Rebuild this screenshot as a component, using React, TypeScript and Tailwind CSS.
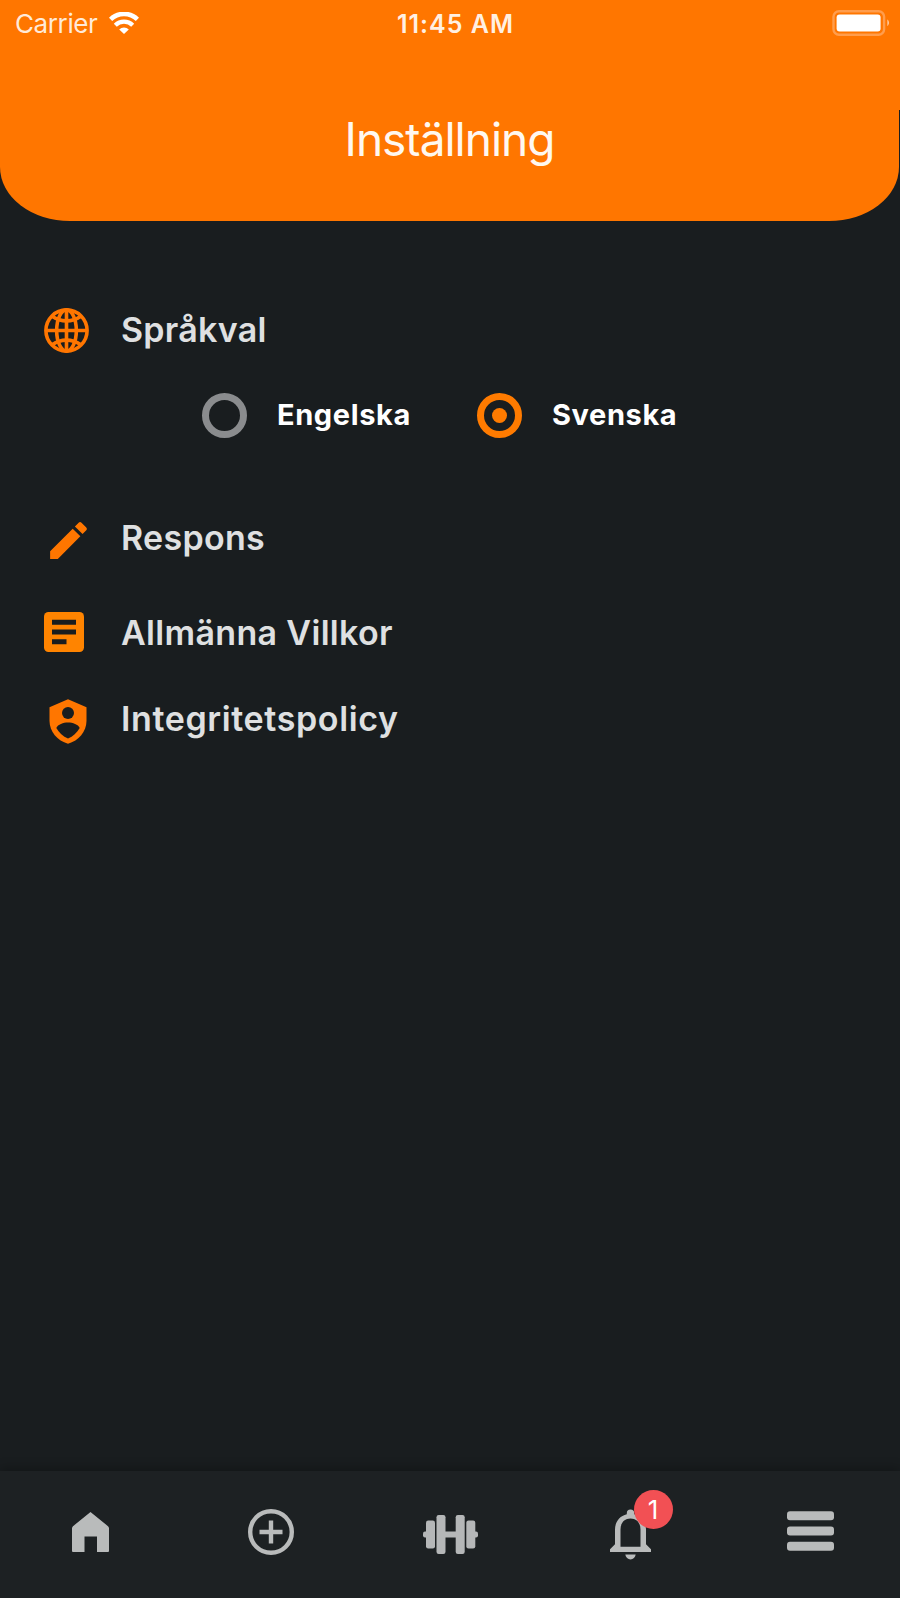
import type { ReactNode } from "react";

function WifiIcon() {
  return (
    <svg className="h-[22px] w-[30px]" viewBox="0 0 30 22" fill="none">
      <path d="M1.600 7.300a19.300 19.300 0 0 1 26.800 0" stroke="#fff" strokeWidth="4.600" />
      <path d="M6.300 13.300a12.300 12.300 0 0 1 17.400 0" stroke="#fff" strokeWidth="4.200" />
      <path d="M10.200 17.400a6.800 6.800 0 0 1 9.600 0L15 22z" fill="#fff" />
    </svg>
  );
}

function BatteryIcon() {
  return (
    <svg className="h-[26px] w-[58px]" viewBox="0 0 58 26" fill="none">
      <rect x="1.500" y="1.200" width="50.600" height="23.600" rx="5.500" stroke="#ff9d4d" strokeWidth="2.400" />
      <rect x="4.600" y="4.600" width="44" height="16.800" rx="3" fill="#fff" />
      <path d="M55.300 9.500c2.300 1.300 2.300 5.200 0 6.500z" fill="#ffc799" />
    </svg>
  );
}

function GlobeIcon() {
  return (
    <svg className="size-[45px]" viewBox="32 32 448 448" fill="none" stroke="#ff7600" strokeWidth="36">
      <circle cx="256" cy="256" r="205" />
      <ellipse cx="256" cy="256" rx="98" ry="205" />
      <path d="M256 48v416M464 256H48" />
      <path d="M117.330 117.330c38.240 27.150 86.380 43.340 138.670 43.340s100.430-16.190 138.670-43.340M394.670 394.670c-38.240-27.150-86.380-43.340-138.670-43.340s-100.430 16.190-138.670 43.340" />
    </svg>
  );
}

function PencilIcon() {
  return (
    <svg className="size-[49px]" viewBox="0 0 24 24" fill="#ff7600">
      <path d="M3 17.250V21h3.750L17.810 9.940l-3.750-3.750L3 17.250zM20.710 7.040a1 1 0 0 0 0-1.410l-2.340-2.340a1 1 0 0 0-1.410 0l-1.830 1.830 3.750 3.750 1.830-1.830z" />
    </svg>
  );
}

function ArticleIcon() {
  return (
    <svg className="size-10" viewBox="0 0 40 40">
      <rect width="40" height="40" rx="4.500" fill="#ff8400" />
      <path d="M8 7.700h24v5H8zM8 17.500h24v5H8zM8 27.200h14.500v5H8z" fill="#191d1f" />
    </svg>
  );
}

function ShieldIcon() {
  return (
    <svg className="h-[45px] w-[38px]" viewBox="0 0 38 45">
      <path d="M19 .3 37.500 8.200v13.600C37.500 32.500 29.600 42 19 44.700 8.400 42 .5 32.500 .5 21.800V8.200z" fill="#ff7600" />
      <circle cx="19" cy="14" r="6" fill="#191d1f" />
      <path d="M7.300 29c1.500-3.500 7-5.400 11.700-5.400S29.200 25.500 30.700 29C28 33.700 24 37.600 19 39.600 14 37.600 10 33.700 7.300 29z" fill="#191d1f" />
    </svg>
  );
}

function HomeIcon() {
  return (
    <svg className="h-10 w-[37px]" viewBox="0 0 37 40">
      <path d="M18.500 0 36 14.200q1 1 1 2.300V39q0 1-1 1H25V24.500H12.500V40H1q-1 0-1-1V16.500q0-1.300 1-2.300z" fill="#b9bbbb" />
    </svg>
  );
}

function AddIcon() {
  return (
    <svg className="size-[46px]" viewBox="0 0 46 46" fill="none" stroke="#b9bbbb" strokeWidth="4.400">
      <circle cx="23" cy="23" r="20.800" />
      <path d="M23 11.500v23M11.500 23h23" />
    </svg>
  );
}

function DumbbellIcon() {
  return (
    <svg className="h-[39px] w-[55px]" viewBox="0 0 55 39" fill="#b5b7b8">
      <rect y="16.500" width="5" height="6" rx="2" />
      <rect x="3" y="5.500" width="9" height="28" rx="2.200" />
      <rect x="13.500" width="9" height="39" rx="2.200" />
      <rect x="22" y="16.500" width="11" height="6" />
      <rect x="32.700" width="9" height="39" rx="2.200" />
      <rect x="43.300" y="5.500" width="9" height="28" rx="2.200" />
      <rect x="50" y="16.500" width="5" height="6" rx="2" />
    </svg>
  );
}

function BellIcon() {
  return (
    <svg className="h-[51px] w-[41px]" viewBox="0 0 41 51" fill="#b9bbbb">
      <path
        fillRule="evenodd"
        d="M16.800 5.200V4.200a3.700 3.700 0 0 1 7.400 0v1C31.600 7 36 13 36 20.500v14.800l5 5V43H0v-2.700l5-5V20.500C5 13 9.400 7 16.800 5.200zM20.500 9.600c-6.300 0-10 4.600-10 10.900v17.300h20V20.500c0-6.300-3.700-10.900-10-10.900z"
      />
      <path d="M15.300 45.500h10.400c-.5 3-2.500 4.900-5.200 4.900s-4.700-1.900-5.200-4.900z" />
    </svg>
  );
}

function MenuIcon() {
  return (
    <svg className="h-10 w-[47px]" viewBox="0 0 47 40" fill="#b9bbbb">
      <rect y=".3" width="47" height="9" rx="3" />
      <rect y="15.500" width="47" height="9" rx="3" />
      <rect y="30.700" width="47" height="9" rx="3" />
    </svg>
  );
}

function Radio({ checked }: { checked: boolean }) {
  return (
    <span
      className={
        checked
          ? "flex size-[45px] items-center justify-center rounded-full border-[7px] border-[#ff7b00]"
          : "flex size-[45px] items-center justify-center rounded-full border-[7px] border-[#8a8c8e]"
      }
    >
      {checked && <span className="size-[15px] rounded-full bg-[#ff7b00]" />}
    </span>
  );
}

function Row({ icon, children, className }: { icon: ReactNode; children: ReactNode; className: string }) {
  return (
    <div className={`flex items-center ${className}`}>
      <span className="flex w-[77px] shrink-0 items-center">{icon}</span>
      <span className="text-[34px] leading-[50px] font-semibold whitespace-nowrap text-[#dfe0e1]">{children}</span>
    </div>
  );
}

export default function App() {
  return (
    <div className="flex h-[1598px] w-[900px] flex-col overflow-hidden bg-[#191d1f] font-['Inter','Liberation_Sans',sans-serif]">
      <div className="h-[221px] shrink-0 bg-[linear-gradient(#ff7600,#ff7600)] bg-[length:100%_110px] bg-no-repeat">
        <header className="flex h-[221px] w-[899px] flex-col rounded-b-[70px_54px] bg-[#ff7600] text-white">
          <div className="grid h-[46px] grid-cols-[1fr_auto_1fr] items-center pr-[9px] pl-[15px]">
            <div className="flex items-center gap-3">
              <span className="pt-0.5 text-[26px] leading-8 tracking-[-0.400px] text-[#ffead9]">Carrier</span>
              <WifiIcon />
            </div>
            <span className="pt-0.5 pl-[6px] text-[25px] leading-8 font-semibold tracking-[1px] text-[#fff0e3]">11:45 AM</span>
            <div className="flex justify-end">
              <BatteryIcon />
            </div>
          </div>
          <h1 className="pt-[63px] text-center text-[46px] leading-[60px] font-normal tracking-[-1px] text-[#fff8f0]">Inställning</h1>
        </header>
      </div>

      <main className="flex flex-1 flex-col pt-[84px] pl-11">
        <Row className="h-[50px] tracking-[0.250px]" icon={<GlobeIcon />}>Språkval</Row>
        <div className="mt-[38px] flex h-[45px] items-center pl-[158px] text-[29px] font-bold tracking-[0.600px] text-white">
          <div className="flex w-[275px] items-center gap-[30px]">
            <Radio checked={false} />
            <span className="-mt-0.5">Engelska</span>
          </div>
          <div className="flex items-center gap-[30px]">
            <Radio checked />
            <span className="-mt-0.5">Svenska</span>
          </div>
        </div>
        <Row className="mt-[75px] h-[50px] tracking-[0.300px]" icon={<span className="pt-1"><PencilIcon /></span>}>Respons</Row>
        <Row className="mt-[45px] h-[50px] tracking-[0.330px]" icon={<span className="-mt-0.5"><ArticleIcon /></span>}>Allmänna Villkor</Row>
        <Row className="mt-[36px] h-[50px] tracking-[0.620px]" icon={<span className="pt-1 pl-[5px]"><ShieldIcon /></span>}>Integritetspolicy</Row>
      </main>

      <nav className="grid h-[127px] shrink-0 grid-cols-5 justify-items-center bg-[#1d2123] shadow-[0_-3px_10px_rgba(0,0,0,0.250)]">
        <span className="pt-[41px]"><HomeIcon /></span>
        <span className="pt-[38px] pl-px"><AddIcon /></span>
        <span className="pt-[44px]"><DumbbellIcon /></span>
        <span className="relative pt-[38px]">
          <BellIcon />
          <span className="absolute top-[19px] left-[24px] flex size-[39px] items-center justify-center rounded-full bg-[#f25054] text-[26px] leading-none text-white">1</span>
        </span>
        <span className="pt-10"><MenuIcon /></span>
      </nav>
    </div>
  );
}
